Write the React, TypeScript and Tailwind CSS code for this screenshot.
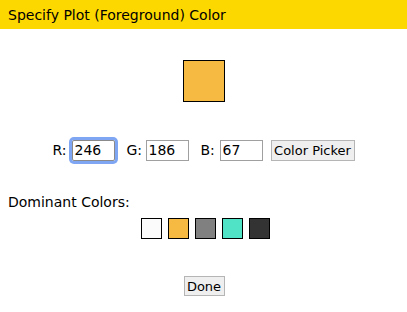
import React from "react";

const font = { fontFamily: '"DejaVu Sans", Verdana, sans-serif' };

export default function App() {
  const swatches = ["#fbfbfb", "#f6ba43", "#808080", "#50e3c5", "#333333"];
  return (
    <div className="w-[407px] h-[312px] bg-white text-black" style={font}>
      <div className="h-[29px] bg-[#fdd700] flex items-center pl-[8px] text-[14px] leading-none">
        Specify Plot (Foreground) Color
      </div>
      <div className="flex justify-center pt-[31px]">
        <div className="w-[42px] h-[42px] bg-[#f6ba43] border-[1.5px] border-black"></div>
      </div>
      <div className="flex items-center justify-center mt-[37px] h-[22px] text-[14px]">
        <span className="w-[19px]">R:</span>
        <input
          readOnly
          value="246"
          className="w-[43px] h-[21px] border border-[#8a8a8a] px-[2px] text-[14px] outline-none rounded-[2px] ring-[3px] ring-[#7fa6f2]"
          style={font}
        />
        <span className="w-[19px] ml-[12px]">G:</span>
        <input
          readOnly
          value="186"
          className="w-[43px] h-[21px] border border-[#a0a0a0] px-[2px] text-[14px] outline-none"
          style={font}
        />
        <span className="w-[19px] ml-[12px]">B:</span>
        <input
          readOnly
          value="67"
          className="w-[43px] h-[21px] border border-[#a0a0a0] px-[2px] text-[14px] outline-none"
          style={font}
        />
        <button
          className="ml-[8px] w-[84px] h-[21px] bg-[#efefef] border border-[#b5b5b5] text-[13px] leading-none"
          style={font}
        >
          Color Picker
        </button>
      </div>
      <div className="pl-[8px] mt-[33px] text-[14px] leading-[16px]">Dominant Colors:</div>
      <div className="flex justify-center gap-[6px] mt-[8px] pl-[3px]">
        {swatches.map((c) => (
          <div key={c} className="w-[21px] h-[21px] border-[1.5px] border-black" style={{ backgroundColor: c }}></div>
        ))}
      </div>
      <div className="flex justify-center mt-[37px]">
        <button
          className="w-[41px] h-[20px] bg-[#efefef] border border-[#b5b5b5] text-[13px] leading-none ml-[1px]"
          style={font}
        >
          Done
        </button>
      </div>
    </div>
  );
}
